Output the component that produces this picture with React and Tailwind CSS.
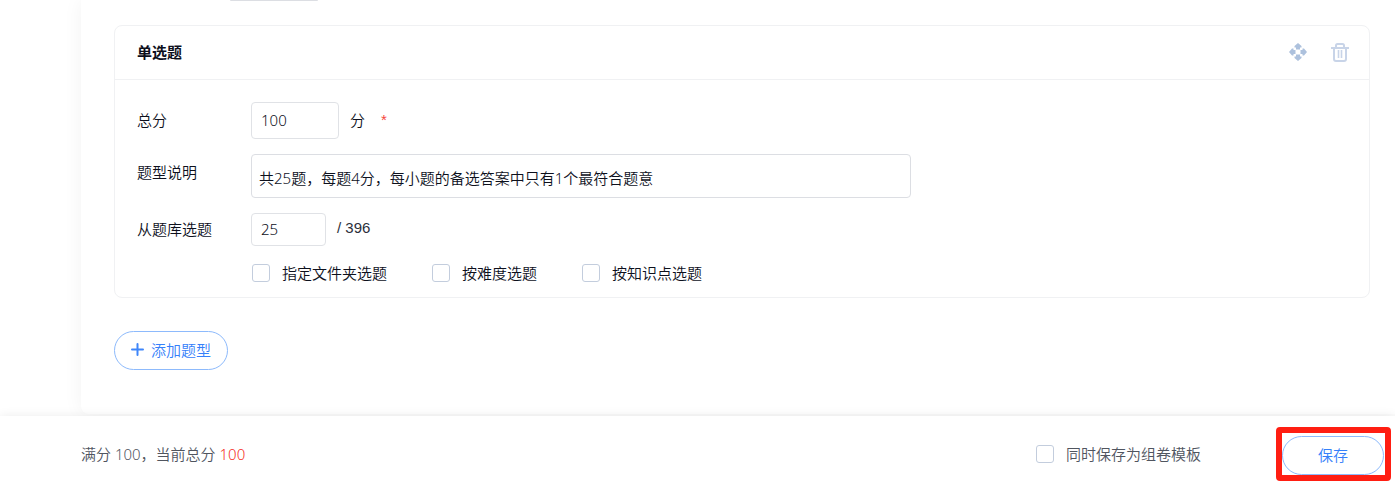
import { useState } from 'react';

const inputStyle = 'rounded border border-[#e0e2e6] bg-white pb-0.5 pl-[9px] pr-2 outline-none focus:border-[#4a8ffc]';

const MoveIcon = () => (
    <svg width="18" height="18" viewBox="0 0 18 18" fill="#adc1dd" aria-hidden="true">
        <path d="M9 0L12.5 3V4.5H11V6.5H7V4.5H5.5V3Z" />
        <path d="M9 18L12.5 15V13.5H11V11.5H7V13.5H5.5V15Z" />
        <path d="M0 9L3 5.5H4.5V7H6.5V11H4.5V12.5H3Z" />
        <path d="M18 9L15 5.5H13.5V7H11.5V11H13.5V12.5H15Z" />
    </svg>
);

const TrashIcon = () => (
    <svg width="18" height="20" viewBox="0 0 18 20" fill="none" stroke="#c8d4e8" strokeWidth="2" aria-hidden="true">
        <path d="M0 6H18" />
        <path d="M5 5V3.5Q5 2 6.5 2H11.5Q13 2 13 3.5V5" />
        <path d="M3 6V17Q3 19 5 19H13Q15 19 15 17V6" />
        <path d="M7.5 8V16M10.5 8V16" strokeWidth="1.6" />
    </svg>
);

const Checkbox = ({ label, className = '' }) => (
    <label className={`flex items-center gap-3 ${className}`}>
        <input
            type="checkbox"
            className="size-[18px] appearance-none rounded-[3px] border border-[#c3cddd] bg-white checked:bg-[#4a8ffc]"
        />
        {label}
    </label>
);

const App = () => {
    const [score, setScore] = useState('100');
    const [description, setDescription] = useState('共25题，每题4分，每小题的备选答案中只有1个最符合题意');
    const [count, setCount] = useState('25');

    return (
        <div className="flex min-h-screen flex-col bg-white font-['Noto_Sans','Noto_Sans_CJK_SC',sans-serif] text-[15px] leading-6 font-[350] text-[#0d101c]">
            <main className="grow overflow-hidden pb-0.5 pl-[81px]">
                <div className="rounded-bl-lg bg-white pr-[25px] pb-[44px] pl-[33px] shadow-[0_0_20px_rgba(0,0,0,0.05)]">
                    <div className="ml-[116px] h-px w-[88px] rounded-b bg-[#dcdee3]" />

                    {/* Question type card */}
                    <section className="mt-6 rounded-lg border border-[#f0f1f3]">
                        <header className="flex h-[54px] items-center justify-between border-b border-[#f0f1f3] pr-5 pb-0.5 pl-[22px]">
                            <h2 className="font-bold">单选题</h2>
                            <div className="flex items-center gap-6">
                                <button type="button" aria-label="移动"><MoveIcon /></button>
                                <button type="button" aria-label="删除"><TrashIcon /></button>
                            </div>
                        </header>

                        <div className="flex flex-col gap-[15px] pt-[22px] pb-3 pl-[22px]">
                            <div className="flex items-start">
                                <label htmlFor="score" className="w-[114px] leading-9">总分</label>
                                <input
                                    id="score"
                                    value={score}
                                    onChange={(e) => setScore(e.target.value)}
                                    className={`h-[37px] w-[88px] ${inputStyle}`}
                                />
                                <span className="ml-[11px] leading-9">分</span>
                                <span className="ml-4 font-['Liberation_Sans',sans-serif] leading-9 font-normal text-[#f5463c]">*</span>
                            </div>

                            <div className="flex items-start">
                                <label htmlFor="description" className="w-[114px] leading-9">题型说明</label>
                                <textarea
                                    id="description"
                                    rows={1}
                                    value={description}
                                    onChange={(e) => setDescription(e.target.value)}
                                    className="h-11 w-[660px] resize-none overflow-hidden rounded border border-[#dcdee3] px-[7px] pt-[11px] outline-none focus:border-[#4a8ffc]"
                                />
                            </div>

                            <div className="flex items-start">
                                <label htmlFor="count" className="w-[114px] leading-8">从题库选题</label>
                                <input
                                    id="count"
                                    value={count}
                                    onChange={(e) => setCount(e.target.value)}
                                    className={`h-[33px] w-[75px] ${inputStyle}`}
                                />
                                <span className="ml-[11px] font-['Liberation_Sans',sans-serif] leading-[30px] font-normal text-[#2b2f3b]">/ 396</span>
                            </div>

                            <div className="flex gap-[45px] pl-[115px]">
                                <Checkbox label="指定文件夹选题" />
                                <Checkbox label="按难度选题" />
                                <Checkbox label="按知识点选题" />
                            </div>
                        </div>
                    </section>

                    <button
                        type="button"
                        className="mt-[33px] flex h-[39px] items-center gap-[7px] rounded-full border border-[#8dbafc] px-4 pb-0.5 text-[#3580fa]"
                    >
                        <svg width="13" height="13" viewBox="0 0 13 13" stroke="#3f86fa" strokeWidth="2" strokeLinecap="round" aria-hidden="true">
                            <path d="M6.5 1V12M1 6.5H12" />
                        </svg>
                        添加题型
                    </button>
                </div>
            </main>

            <footer className="z-10 flex h-[76px] items-center justify-between bg-white pr-1 pl-[81px] text-[#50555f] shadow-[0_0_10px_rgba(0,0,0,0.08)]">
                <p>满分 100，当前总分 <span className="text-[#f5301f]">100</span></p>
                <div className="flex items-center">
                    <Checkbox label="同时保存为组卷模板" className="mr-[75px]" />
                    {/* Highlight frame around the save button */}
                    <div className="rounded border-6 border-[#ff1e12] pt-[3px] pr-px">
                        <button type="button" className="block h-[39px] w-[102px] rounded-full border border-[#8dbafc] pb-0.5 text-[#3580fa]">
                            保存
                        </button>
                    </div>
                </div>
            </footer>
        </div>
    );
};

export default App;
